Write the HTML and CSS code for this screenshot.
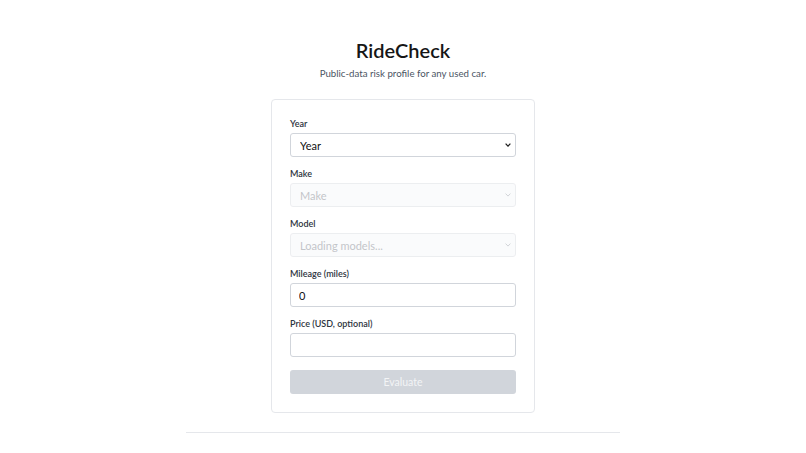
FILE: index.html
```html
<!DOCTYPE html>
<html lang="en">
<head>
<meta charset="utf-8">
<title>RideCheck</title>
<link rel="stylesheet" href="styles.css">
</head>
<body>
<main class="page">
  <header class="hero">
    <h1 class="title">RideCheck</h1>
    <p class="subtitle">Public-data risk profile for any used car.</p>
  </header>
  <form class="card">
    <div class="field">
      <label class="label" for="year">Year</label>
      <select id="year" class="control select">
        <option>Year</option>
      </select>
    </div>
    <div class="field">
      <label class="label" for="make">Make</label>
      <select id="make" class="control select" disabled>
        <option>Make</option>
      </select>
    </div>
    <div class="field">
      <label class="label" for="model">Model</label>
      <select id="model" class="control select" disabled>
        <option>Loading models...</option>
      </select>
    </div>
    <div class="field">
      <label class="label" for="mileage">Mileage (miles)</label>
      <input id="mileage" class="control" type="text" value="0">
    </div>
    <div class="field">
      <label class="label" for="price">Price (USD, optional)</label>
      <input id="price" class="control" type="text">
    </div>
    <button class="submit" type="button" disabled>Evaluate</button>
  </form>
  <hr class="rule">
</main>
</body>
</html>
```

FILE: styles.css
```css
* { box-sizing: border-box; }
html, body { margin: 0; padding: 0; background: #ffffff; }
body {
  font-family: Lato, "Noto Sans", sans-serif;
  color: #111827;
}
.page {
  display: flex;
  flex-direction: column;
  align-items: center;
  padding-top: 38px;
}
.hero { text-align: center; }
.title {
  margin: 0;
  font-size: 20px;
  line-height: 24px;
  font-weight: 600;
  color: #161616;
}
.subtitle {
  margin: 5px 0 0;
  font-size: 9.7px;
  line-height: 12px;
  color: #4b5563;
}
.card {
  margin-top: 20px;
  width: 264px;
  padding: 18px 18px 18px;
  border: 1px solid #e5e7eb;
  border-radius: 4px;
  display: flex;
  flex-direction: column;
  gap: 11px;
}
.field {
  display: flex;
  flex-direction: column;
  gap: 3px;
}
.label {
  font-size: 9px;
  line-height: 12px;
  font-weight: 600;
  color: #2d3440;
}
.control {
  height: 24px;
  width: 100%;
  border: 1px solid #d1d5db;
  border-radius: 3px;
  background-color: #ffffff;
  font-family: Lato, "Noto Sans", sans-serif;
  font-size: 11px;
  color: #111111;
  padding: 0 8px;
  margin: 0;
  outline: none;
}
.select {
  -webkit-appearance: none;
  appearance: none;
  padding: 0 20px 0 9px;
  background-image: url("data:image/svg+xml,%3Csvg xmlns='http://www.w3.org/2000/svg' width='6' height='4' viewBox='0 0 6 4'%3E%3Cpath d='M0.6 0.6 L3 3.1 L5.4 0.6' fill='none' stroke='%23222' stroke-width='1.3'/%3E%3C/svg%3E");
  background-repeat: no-repeat;
  background-position: right 4px center;
  background-size: 6px 4px;
}
.select:disabled {
  background-color: #f9fafb;
  color: #a9adb3;
  border-color: #e5e7eb;
  background-image: url("data:image/svg+xml,%3Csvg xmlns='http://www.w3.org/2000/svg' width='6' height='4' viewBox='0 0 6 4'%3E%3Cpath d='M0.6 0.6 L3 3.1 L5.4 0.6' fill='none' stroke='%23b8bcc2' stroke-width='0.9'/%3E%3C/svg%3E");
}
.submit {
  margin-top: 2px;
  height: 24px;
  width: 100%;
  border: none;
  border-radius: 3px;
  background: #d1d5db;
  color: #f3f4f6;
  font-family: Lato, "Noto Sans", sans-serif;
  font-size: 10.5px;
}
.rule {
  margin: 19px 0 0;
  width: 434px;
  border: none;
  border-top: 1px solid #e5e7eb;
}
```
